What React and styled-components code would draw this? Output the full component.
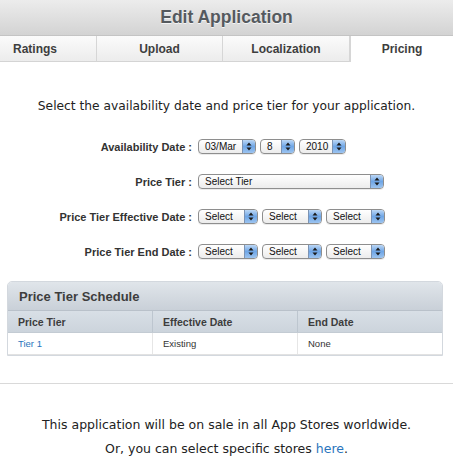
import React from "react";
import styled, { createGlobalStyle } from "styled-components";

const Global = createGlobalStyle`
  html, body { margin: 0; padding: 0; background: #fff; }
  body { font-family: "DejaVu Sans", "Liberation Sans", sans-serif; color: #222; }
`;

const Page = styled.div`
  width: 453px;
  height: 462px;
  overflow: hidden;
  background: #fff;
`;

const Header = styled.div`
  height: 36px;
  display: flex;
  align-items: center;
  justify-content: center;
  background: linear-gradient(#ececec, #d3d3d3);
  border-bottom: 1px solid #c4c4c4;
  box-sizing: border-box;
`;

const Title = styled.h1`
  margin: 0;
  font-family: "Liberation Sans", Arial, sans-serif;
  font-size: 17.5px;
  font-weight: bold;
  color: #555a5f;
  text-shadow: 0 1px 0 #f4f4f4;
`;

const Tabs = styled.div`
  display: flex;
  height: 26px;
`;

const Tab = styled.div`
  width: ${(p) => p.$w}px;
  display: flex;
  align-items: center;
  justify-content: ${(p) => (p.$left ? "flex-start" : "center")};
  padding-left: ${(p) => (p.$left ? "13px" : "0")};
  box-sizing: border-box;
  font-family: "Liberation Sans", Arial, sans-serif;
  font-size: 12px;
  font-weight: bold;
  color: #3e3e3e;
  background: ${(p) => (p.$active ? "#fff" : "linear-gradient(#fbfbfb, #ececec)")};
  border-right: ${(p) => (p.$active ? "none" : "1px solid #d6d6d6")};
  border-bottom: ${(p) => (p.$active ? "none" : "1px solid #d4d4d4")};
  border-left: ${(p) => (p.$active ? "1px solid #d6d6d6" : "none")};
`;

const Intro = styled.p`
  margin: 37px 0 0;
  text-align: center;
  font-size: 12.25px;
  color: #222;
`;

const Form = styled.div`
  margin-top: 26px;
  display: grid;
  grid-template-columns: 192px auto;
  column-gap: 6px;
  row-gap: 20px;
  align-items: center;
`;

const Label = styled.div`
  text-align: right;
  font-family: "Liberation Sans", Arial, sans-serif;
  font-size: 11px;
  font-weight: bold;
  color: #333;
  white-space: nowrap;
`;

const Selects = styled.div`
  display: flex;
  gap: 4px;
`;

const Select = styled.div`
  width: ${(p) => p.$w}px;
  height: 15px;
  box-sizing: border-box;
  display: flex;
  align-items: center;
  border: 1px solid #8e8e8e;
  border-radius: 4px;
  background: linear-gradient(#ffffff, #ececec);
  overflow: hidden;
  font-family: "Liberation Sans", Arial, sans-serif;
  font-size: 10px;
  color: #111;
  box-shadow: 0 1px 0 rgba(0,0,0,0.08);
`;

const SelText = styled.span`
  flex: 1;
  padding-left: 6px;
  white-space: nowrap;
`;

const Knob = styled.span`
  width: 12px;
  height: 100%;
  display: flex;
  align-items: center;
  justify-content: center;
  background: linear-gradient(#bcd7f5, #6fa6e6 50%, #9cc4f0);
  border-left: 1px solid #7c93b3;
`;

const Arrows = () => (
  <svg width="6" height="9" viewBox="0 0 6 9">
    <path d="M3 0.5 L5.5 3.5 L0.5 3.5 Z M3 8.5 L5.5 5.5 L0.5 5.5 Z" fill="#1a1a1a" />
  </svg>
);

const Sel = ({ w, children }) => (
  <Select $w={w}>
    <SelText>{children}</SelText>
    <Knob>
      <Arrows />
    </Knob>
  </Select>
);

const Table = styled.div`
  margin: 22px 10px 0 7px;
  border: 1px solid #d3d8de;
  border-radius: 5px 5px 0 0;
  overflow: hidden;
`;

const TableTitle = styled.div`
  height: 28px;
  display: flex;
  align-items: center;
  padding-left: 11px;
  background: linear-gradient(#e0e5ea, #c9d0d8);
  border-bottom: 1px solid #b9c1ca;
  font-family: "Liberation Sans", Arial, sans-serif;
  font-size: 13px;
  font-weight: bold;
  color: #3d3d3d;
`;

const Row = styled.div`
  display: grid;
  grid-template-columns: 144px 145px 1fr;
  height: 21px;
  background: ${(p) => (p.$head ? "linear-gradient(#d8dfe6, #ccd4dc)" : "#fff")};
  border-bottom: ${(p) => (p.$head ? "1px solid #c3cbd3" : "1px solid #e2e2e2")};
`;

const Cell = styled.div`
  display: flex;
  align-items: center;
  padding-left: 10px;
  font-family: "Liberation Sans", Arial, sans-serif;
  font-size: ${(p) => (p.$head ? "10.5px" : "9.5px")};
  font-weight: ${(p) => (p.$head ? "bold" : "normal")};
  color: ${(p) => (p.$link ? "#2a75bd" : p.$head ? "#3d3d3d" : "#333")};
  border-left: ${(p) => (p.$first ? "none" : p.$head ? "1px solid #bdc6cf" : "1px solid #e6e6e6")};
`;

const Rule = styled.hr`
  margin: 27px 0 0;
  border: none;
  border-top: 1px solid #d9d9d9;
`;

const Footer = styled.div`
  margin-top: 33px;
  text-align: center;
  font-size: 12.5px;
  color: #222;
  display: flex;
  flex-direction: column;
  gap: 9px;
`;

const Link = styled.a`
  color: #2a75bd;
  text-decoration: none;
`;

export default function App() {
  return (
    <Page>
      <Global />
      <Header>
        <Title>Edit Application</Title>
      </Header>
      <Tabs>
        <Tab $w={97} $left>Ratings</Tab>
        <Tab $w={126}>Upload</Tab>
        <Tab $w={127}>Localization</Tab>
        <Tab $w={103} $active>Pricing</Tab>
      </Tabs>
      <Intro>Select the availability date and price tier for your application.</Intro>
      <Form>
        <Label>Availability Date :</Label>
        <Selects>
          <Sel w={58}>03/Mar</Sel>
          <Sel w={35}>8</Sel>
          <Sel w={47}>2010</Sel>
        </Selects>
        <Label>Price Tier :</Label>
        <Selects>
          <Sel w={186}>Select Tier</Sel>
        </Selects>
        <Label>Price Tier Effective Date :</Label>
        <Selects>
          <Sel w={60}>Select</Sel>
          <Sel w={60}>Select</Sel>
          <Sel w={59}>Select</Sel>
        </Selects>
        <Label>Price Tier End Date :</Label>
        <Selects>
          <Sel w={60}>Select</Sel>
          <Sel w={60}>Select</Sel>
          <Sel w={59}>Select</Sel>
        </Selects>
      </Form>
      <Table>
        <TableTitle>Price Tier Schedule</TableTitle>
        <Row $head>
          <Cell $head $first>Price Tier</Cell>
          <Cell $head>Effective Date</Cell>
          <Cell $head>End Date</Cell>
        </Row>
        <Row>
          <Cell $first $link>Tier 1</Cell>
          <Cell>Existing</Cell>
          <Cell>None</Cell>
        </Row>
      </Table>
      <Rule />
      <Footer>
        <div>This application will be on sale in all App Stores worldwide.</div>
        <div>
          Or, you can select specific stores <Link href="#">here</Link>.
        </div>
      </Footer>
    </Page>
  );
}
